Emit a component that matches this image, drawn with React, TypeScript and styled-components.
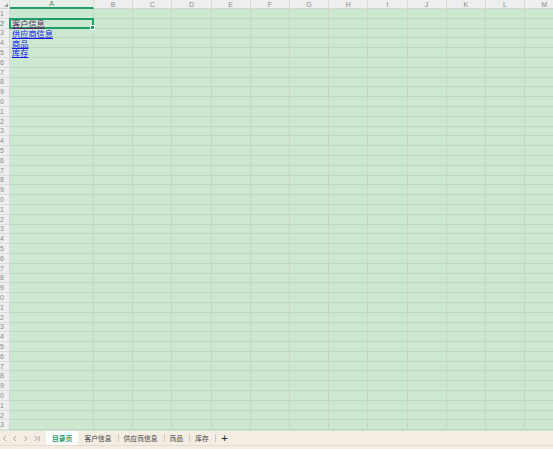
import styled, { createGlobalStyle } from 'styled-components';

const GlobalStyle = createGlobalStyle`
  html, body {
    margin: 0;
    padding: 0;
    width: 553px;
    height: 449px;
    overflow: hidden;
    background: #f3ede3;
    font-family: "Noto Sans CJK SC", "Noto Sans", sans-serif;
  }
`;

const COLS = ['A', 'B', 'C', 'D', 'E', 'F', 'G', 'H', 'I', 'J', 'K', 'L', 'M', 'N'];
const ROW_COUNT = 43;

const Page = styled.div`
  display: flex;
  flex-direction: column;
  width: 553px;
  height: 449px;
  overflow: hidden;
`;

const Sheet = styled.div`
  display: grid;
  grid-template-columns: 10px 84px repeat(13, 39.2px);
  grid-template-rows: 9px repeat(${ROW_COUNT}, 9.8px);
  background: #cde8d0;
  overflow: hidden;
  height: 431px;
`;

const Corner = styled.div`
  position: relative;
  background: #eeeeee;
  border-right: 1px solid #d6d6d6;
  border-bottom: 1px solid #d6d6d6;
  box-sizing: border-box;
  &::after {
    content: '';
    position: absolute;
    right: 1px;
    bottom: 1px;
    border-left: 4px solid transparent;
    border-bottom: 4px solid #9a9a9a;
  }
`;

const ColHeader = styled.div<{ $active?: boolean }>`
  display: flex;
  align-items: center;
  justify-content: center;
  background: ${p => (p.$active ? '#e6eee8' : '#eeeeee')};
  color: ${p => (p.$active ? '#4d8a6d' : '#8a8a8a')};
  font-family: "Liberation Sans", sans-serif;
  font-size: 7px;
  border-right: 1px solid #d9d9d9;
  border-bottom: ${p => (p.$active ? '2px solid #1f9d6b' : '1px solid #d6d6d6')};
  box-sizing: border-box;
  overflow: hidden;
`;

const RowHeader = styled.div<{ $active?: boolean }>`
  display: flex;
  align-items: center;
  justify-content: flex-end;
  padding-right: 5px;
  background: #eeeeee;
  color: ${p => (p.$active ? '#2f8a63' : '#8a8a8a')};
  font-family: "Liberation Sans", sans-serif;
  font-size: 7px;
  white-space: nowrap;
  border-right: 1px solid #d6d6d6;
  border-bottom: 1px solid #dddddd;
  box-sizing: border-box;
  overflow: hidden;
`;

const Cell = styled.div`
  position: relative;
  display: flex;
  align-items: center;
  padding-left: 2px;
  border-right: 1px solid #c9d3c9;
  border-bottom: 1px solid #c4d2c5;
  box-sizing: border-box;
  font-size: 8.2px;
  line-height: 1;
  white-space: nowrap;
  overflow: visible;
`;

const SelectedCell = styled(Cell)`
  border: 2px solid #1f9d6b;
  margin: -1px 0 0 -1px;
  padding-left: 1px;
  z-index: 2;
  &::after {
    content: '';
    position: absolute;
    right: -3px;
    bottom: -3px;
    width: 3px;
    height: 3px;
    background: #1f9d6b;
    border: 1px solid #ffffff;
  }
`;

const Link = styled.a<{ $visited?: boolean }>`
  color: ${p => (p.$visited ? '#5a2a66' : '#1010f0')};
  text-decoration: underline;
  cursor: pointer;
`;

const TabBar = styled.div`
  display: flex;
  align-items: stretch;
  height: 14px;
  background: #f3ede3;
  border-bottom: 1px solid #e3dccf;
  font-size: 6.8px;
`;

const NavButton = styled.span`
  display: flex;
  align-items: center;
  justify-content: center;
  width: 10.5px;
  color: #9a9a9a;
`;

const Tabs = styled.div`
  display: flex;
  align-items: stretch;
  margin-left: 4px;
`;

const Tab = styled.div<{ $active?: boolean }>`
  position: relative;
  display: flex;
  align-items: center;
  padding: 0 6px;
  background: ${p => (p.$active ? '#ffffff' : 'transparent')};
  color: ${p => (p.$active ? '#1f9d6b' : '#444444')};
  font-weight: ${p => (p.$active ? 700 : 400)};
  white-space: nowrap;
  border-radius: 0 0 2px 2px;
  & + &::before {
    content: '';
    position: absolute;
    left: 0;
    top: 3px;
    bottom: 3px;
    border-left: 1px solid #d2cbbf;
  }
`;

const AddTab = styled.div`
  display: flex;
  align-items: center;
  padding: 0 5px;
  color: #333333;
  font-family: "DejaVu Sans", sans-serif;
  font-size: 9px;
  font-weight: 700;
  border-left: 1px solid #d2cbbf;
  margin: 3px 0;
`;

function Chevron({ dir, bar }: { dir: 'left' | 'right'; bar?: boolean }) {
  const d = dir === 'left' ? 'M4 1 L1.5 3.5 L4 6' : 'M1.5 1 L4 3.5 L1.5 6';
  return (
    <svg width="7" height="7" viewBox="0 0 7 7" fill="none" stroke="currentColor" strokeWidth="0.9">
      <path d={d} />
      {bar && <path d="M6 1 V6" />}
    </svg>
  );
}

const cellContent: Record<number, { text: string; visited?: boolean }> = {
  2: { text: '客户信息', visited: true },
  3: { text: '供应商信息' },
  4: { text: '商品' },
  5: { text: '库存' },
};

const tabs = ['目录页', '客户信息', '供应商信息', '商品', '库存'];

function App() {
  const rows = Array.from({ length: ROW_COUNT }, (_, i) => i + 1);

  return (
    <Page>
      <GlobalStyle />
      <Sheet>
        <Corner />
        {COLS.map(c => (
          <ColHeader key={c} $active={c === 'A'}>{c}</ColHeader>
        ))}
        {rows.map(r => (
          <RowFragment key={r} row={r} />
        ))}
      </Sheet>
      <TabBar>
        <NavButton><Chevron dir="left" /></NavButton>
        <NavButton><Chevron dir="left" /></NavButton>
        <NavButton><Chevron dir="right" /></NavButton>
        <NavButton><Chevron dir="right" bar /></NavButton>
        <Tabs>
          {tabs.map((t, i) => (
            <Tab key={t} $active={i === 0}>{t}</Tab>
          ))}
          <AddTab>+</AddTab>
        </Tabs>
      </TabBar>
    </Page>
  );
}

function RowFragment({ row }: { row: number }) {
  const content = cellContent[row];
  return (
    <>
      <RowHeader $active={row === 2}>{row}</RowHeader>
      {COLS.map((c, i) => {
        if (i === 0 && row === 2) {
          return (
            <SelectedCell key={c}>
              <Link $visited>{content.text}</Link>
            </SelectedCell>
          );
        }
        return (
          <Cell key={c}>
            {i === 0 && content ? <Link $visited={content.visited}>{content.text}</Link> : null}
          </Cell>
        );
      })}
    </>
  );
}

export default App;
